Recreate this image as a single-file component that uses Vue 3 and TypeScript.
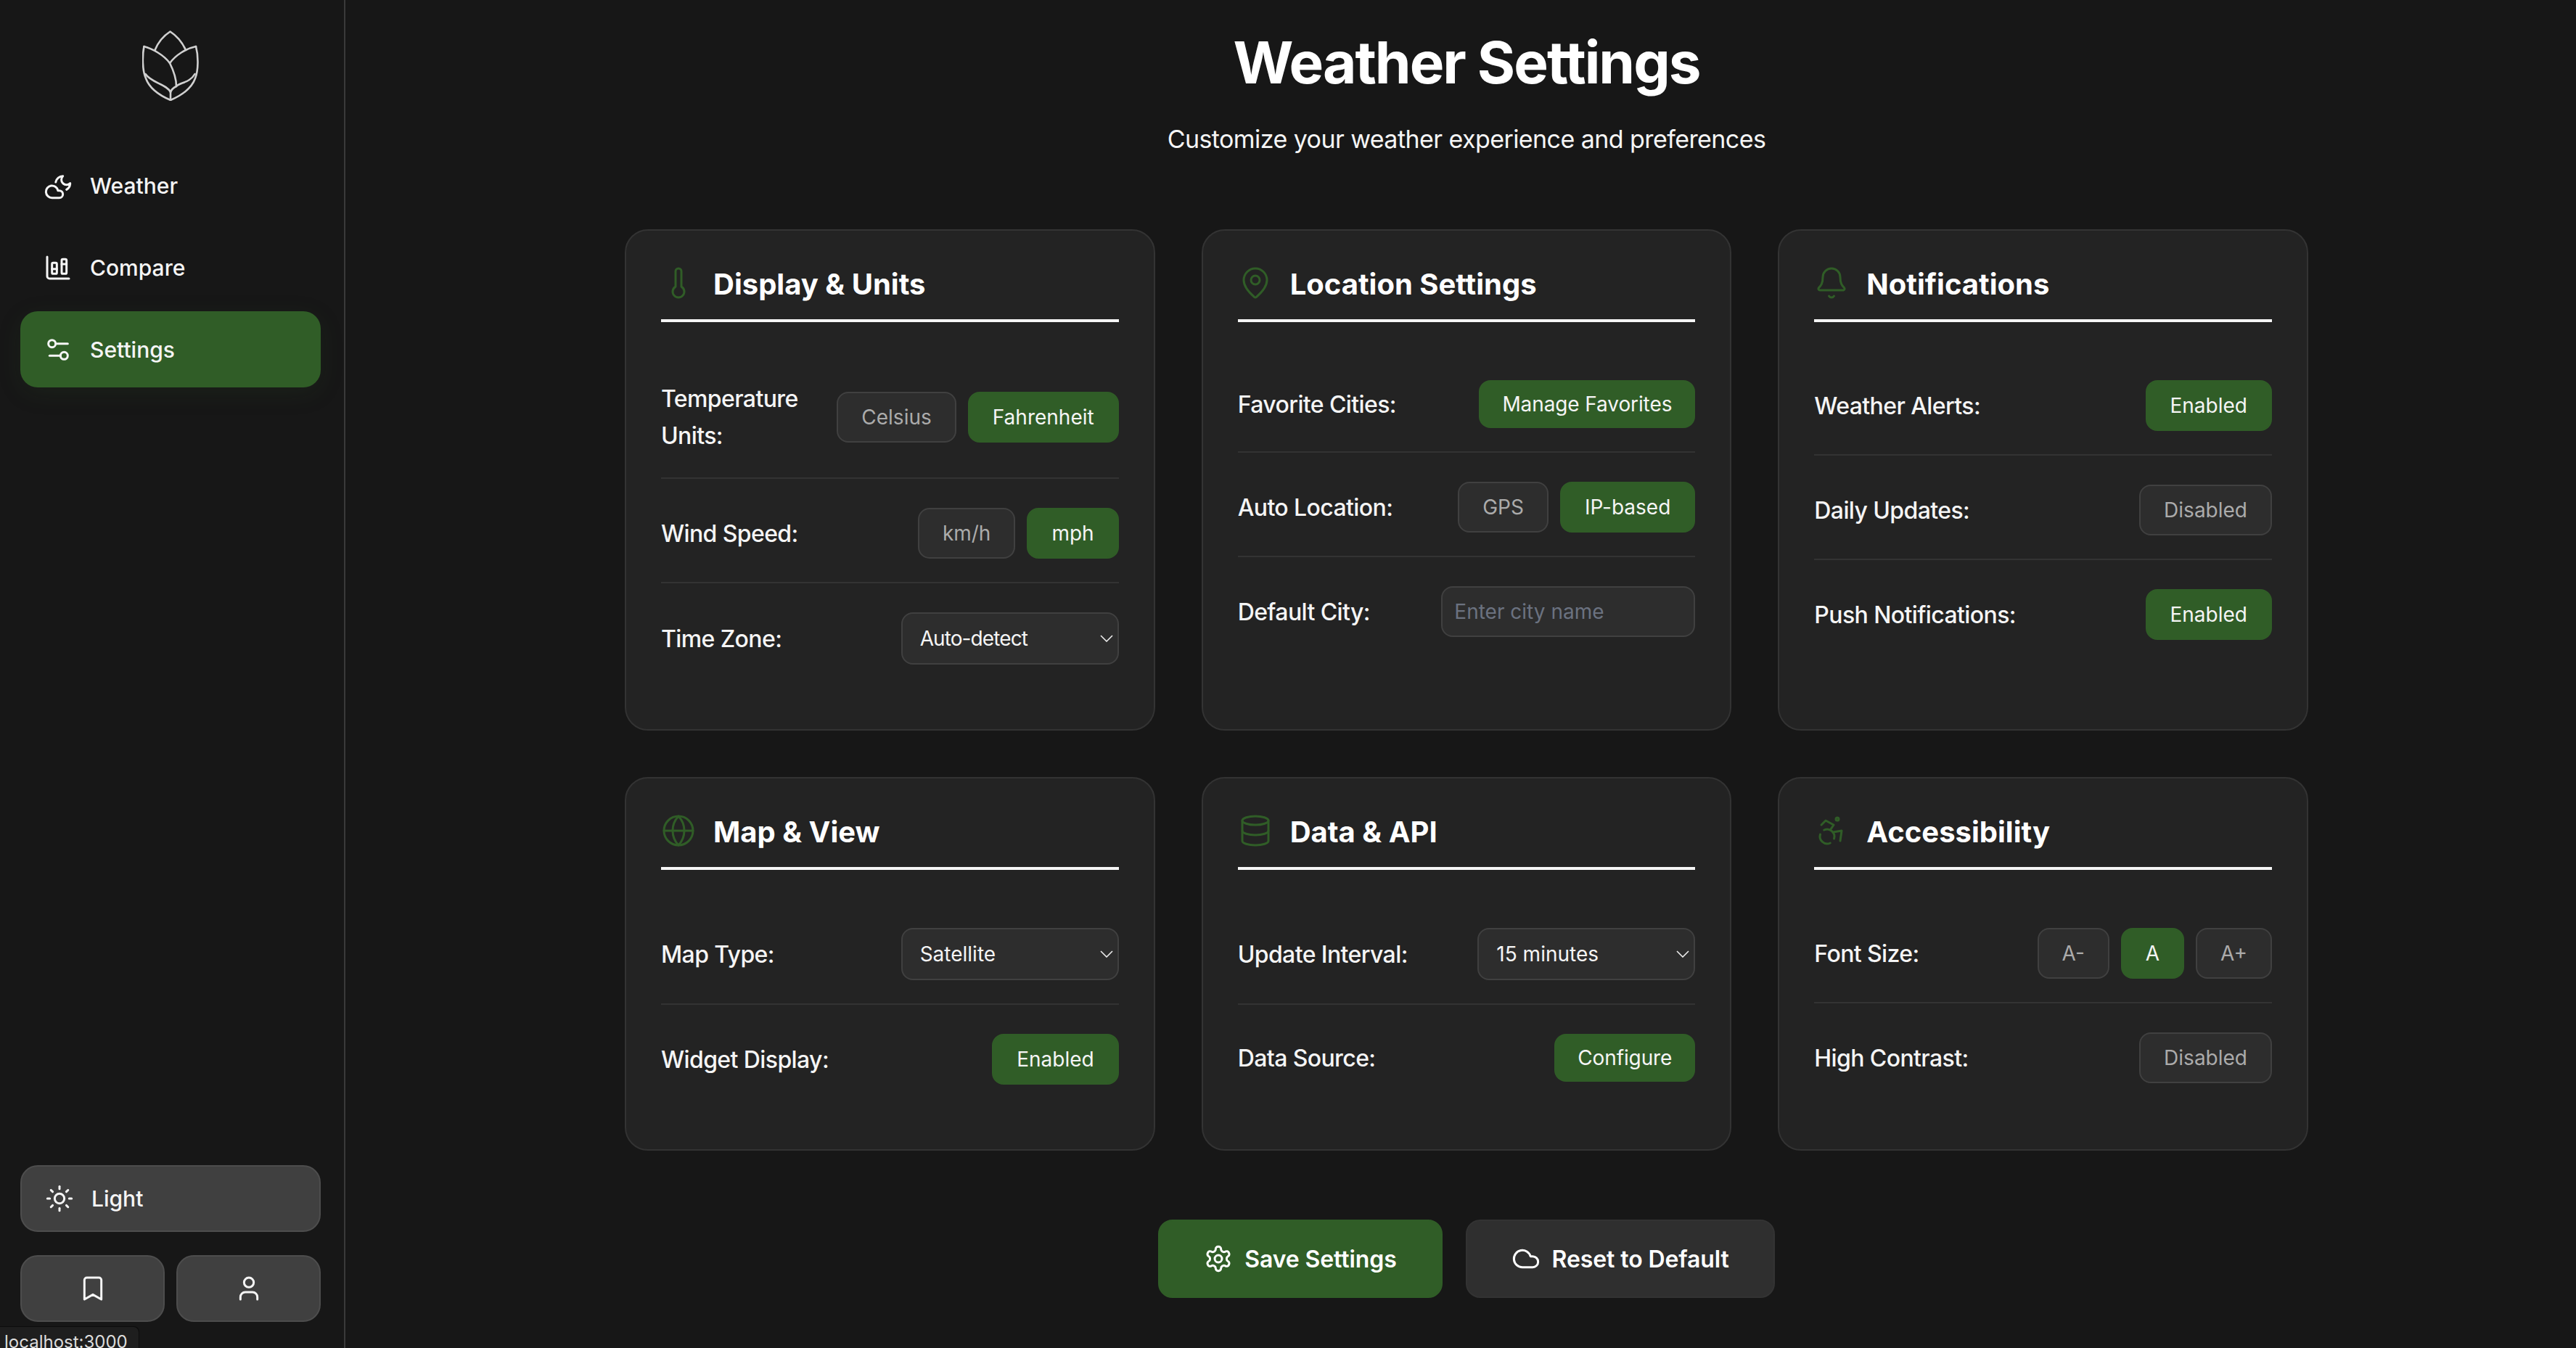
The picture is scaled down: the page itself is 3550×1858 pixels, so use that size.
<script setup lang="ts">
type Row =
  | { label: string; kind: 'toggle'; options: string[]; active: number }
  | { label: string; kind: 'select'; value: string; tight?: boolean }
  | { label: string; kind: 'input'; placeholder: string }
  | { label: string; kind: 'state'; on: boolean }
  | { label: string; kind: 'action'; text: string }

interface Card {
  title: string
  icon: string
  rows: Row[]
}

const icons: Record<string, string> = {
  moon: '<path d="M13 16a3 3 0 1 1 0 6H7a5 5 0 1 1 4.9-6Z"/><path d="M10.1 9A6 6 0 0 1 16 4a4.24 4.24 0 0 0 6 6 6 6 0 0 1-3 5.197"/>',
  chart: '<path d="M11 13H7"/><path d="M19 9h-4"/><path d="M3 3v16a2 2 0 0 0 2 2h16"/><rect x="15" y="5" width="4" height="12" rx="1"/><rect x="7" y="8" width="4" height="9" rx="1"/>',
  sliders: '<path d="M20 7h-9"/><path d="M14 17H5"/><circle cx="17" cy="17" r="3"/><circle cx="7" cy="7" r="3"/>',
  sun: '<circle cx="12" cy="12" r="4"/><path d="M12 2v2"/><path d="M12 20v2"/><path d="m4.93 4.93 1.41 1.41"/><path d="m17.66 17.66 1.41 1.41"/><path d="M2 12h2"/><path d="M20 12h2"/><path d="m6.34 17.66-1.41 1.41"/><path d="m19.07 4.93-1.41 1.41"/>',
  bookmark: '<path d="m19 21-7-4-7 4V5a2 2 0 0 1 2-2h10a2 2 0 0 1 2 2v16z"/>',
  user: '<path d="M19 21v-2a4 4 0 0 0-4-4H9a4 4 0 0 0-4 4v2"/><circle cx="12" cy="7" r="4"/>',
  thermometer: '<path d="M14 4v10.54a4 4 0 1 1-4 0V4a2 2 0 0 1 4 0Z"/>',
  pin: '<path d="M20 10c0 4.993-5.539 10.193-7.399 11.799a1 1 0 0 1-1.202 0C9.539 20.193 4 14.993 4 10a8 8 0 0 1 16 0"/><circle cx="12" cy="10" r="3"/>',
  bell: '<path d="M10.268 21a2 2 0 0 0 3.464 0"/><path d="M3.262 15.326A1 1 0 0 0 4 17h16a1 1 0 0 0 .74-1.673C19.41 13.956 18 12.499 18 8A6 6 0 0 0 6 8c0 4.499-1.411 5.956-2.738 7.326"/>',
  globe: '<circle cx="12" cy="12" r="10"/><path d="M12 2a14.5 14.5 0 0 0 0 20 14.5 14.5 0 0 0 0-20"/><path d="M2 12h20"/>',
  database: '<ellipse cx="12" cy="5" rx="9" ry="3"/><path d="M3 5V19A9 3 0 0 0 21 19V5"/><path d="M3 12A9 3 0 0 0 21 12"/>',
  access: '<circle cx="16" cy="4" r="1"/><path d="m18 19 1-7-6 1"/><path d="m5 8 3-3 5.5 3-2.36 3.5"/><path d="M4.24 14.5a5 5 0 0 0 6.88 6"/><path d="M13.76 17.5a5 5 0 0 0-6.88-6"/>',
  gear: '<path d="M12.22 2h-.44a2 2 0 0 0-2 2v.18a2 2 0 0 1-1 1.73l-.43.25a2 2 0 0 1-2 0l-.15-.08a2 2 0 0 0-2.73.73l-.22.38a2 2 0 0 0 .73 2.73l.15.1a2 2 0 0 1 1 1.72v.51a2 2 0 0 1-1 1.74l-.15.09a2 2 0 0 0-.73 2.73l.22.38a2 2 0 0 0 2.73.73l.15-.08a2 2 0 0 1 2 0l.43.25a2 2 0 0 1 1 1.73V20a2 2 0 0 0 2 2h.44a2 2 0 0 0 2-2v-.18a2 2 0 0 1 1-1.73l.43-.25a2 2 0 0 1 2 0l.15.08a2 2 0 0 0 2.73-.73l.22-.39a2 2 0 0 0-.73-2.73l-.15-.08a2 2 0 0 1-1-1.74v-.5a2 2 0 0 1 1-1.74l.15-.09a2 2 0 0 0 .73-2.73l-.22-.38a2 2 0 0 0-2.73-.73l-.15.08a2 2 0 0 1-2 0l-.43-.25a2 2 0 0 1-1-1.73V4a2 2 0 0 0-2-2z"/><circle cx="12" cy="12" r="3"/>',
  cloud: '<path d="M17.5 19H9a7 7 0 1 1 6.71-9h1.79a4.5 4.5 0 1 1 0 9Z"/>'
}

const navItems = [
  { label: 'Weather', icon: 'moon', active: false },
  { label: 'Compare', icon: 'chart', active: false },
  { label: 'Settings', icon: 'sliders', active: true }
]

const cards: Card[] = [
  {
    title: 'Display & Units',
    icon: 'thermometer',
    rows: [
      { label: 'Temperature Units:', kind: 'toggle', options: ['Celsius', 'Fahrenheit'], active: 1 },
      { label: 'Wind Speed:', kind: 'toggle', options: ['km/h', 'mph'], active: 1 },
      { label: 'Time Zone:', kind: 'select', value: 'Auto-detect', tight: true }
    ]
  },
  {
    title: 'Location Settings',
    icon: 'pin',
    rows: [
      { label: 'Favorite Cities:', kind: 'action', text: 'Manage Favorites' },
      { label: 'Auto Location:', kind: 'toggle', options: ['GPS', 'IP-based'], active: 1 },
      { label: 'Default City:', kind: 'input', placeholder: 'Enter city name' }
    ]
  },
  {
    title: 'Notifications',
    icon: 'bell',
    rows: [
      { label: 'Weather Alerts:', kind: 'state', on: true },
      { label: 'Daily Updates:', kind: 'state', on: false },
      { label: 'Push Notifications:', kind: 'state', on: true }
    ]
  },
  {
    title: 'Map & View',
    icon: 'globe',
    rows: [
      { label: 'Map Type:', kind: 'select', value: 'Satellite' },
      { label: 'Widget Display:', kind: 'state', on: true }
    ]
  },
  {
    title: 'Data & API',
    icon: 'database',
    rows: [
      { label: 'Update Interval:', kind: 'select', value: '15 minutes' },
      { label: 'Data Source:', kind: 'action', text: 'Configure' }
    ]
  },
  {
    title: 'Accessibility',
    icon: 'access',
    rows: [
      { label: 'Font Size:', kind: 'toggle', options: ['A-', 'A', 'A+'], active: 1 },
      { label: 'High Contrast:', kind: 'state', on: false }
    ]
  }
]
</script>

<template>
  <div class="app">
    <aside class="sidebar">
      <div class="logo">
        <svg width="78" height="97" viewBox="0 0 78 97" fill="none" stroke="#d0d0d0" stroke-width="2.6" stroke-linecap="round" stroke-linejoin="round">
          <path d="M17.5 27C22 16 30 7 38.5 1.5 47 7 55 16 60 27" />
          <path d="M2.5 22C14 25 30 34 38 45 43 55 47 65 47 77" />
          <path d="M74 22C60 25 46 34 38 45" />
          <path d="M2.5 22C0 35 0 55 5 66 10 80 25 90 39 96 53 90 68 80 73 66 77.5 55 77.5 35 74 22" />
          <path d="M4.5 60C12 72 34 74 39 85V96" />
          <path d="M72.5 60C66 72 51 72 47 77 43 79 40 82 39 85" />
        </svg>
      </div>
      <nav class="nav">
        <a v-for="item in navItems" :key="item.label" class="nav-item" :class="{ active: item.active }">
          <svg class="ic ic-40" viewBox="0 0 24 24" v-html="icons[item.icon]"></svg>
          <span>{{ item.label }}</span>
        </a>
      </nav>
      <div class="side-footer">
        <button class="theme-btn">
          <svg class="ic ic-40" viewBox="0 0 24 24" v-html="icons.sun"></svg>
          <span>Light</span>
        </button>
        <div class="side-actions">
          <button class="side-btn"><svg class="ic ic-40" viewBox="0 0 24 24" v-html="icons.bookmark"></svg></button>
          <button class="side-btn"><svg class="ic ic-40" viewBox="0 0 24 24" v-html="icons.user"></svg></button>
        </div>
      </div>
    </aside>

    <main class="main">
      <h1>Weather Settings</h1>
      <p class="subtitle">Customize your weather experience and preferences</p>

      <section class="grid">
        <article v-for="card in cards" :key="card.title" class="card">
          <header class="card-head">
            <svg class="ic ic-48" viewBox="0 0 24 24" v-html="icons[card.icon]"></svg>
            <h3>{{ card.title }}</h3>
          </header>
          <div class="rows">
            <div v-for="row in card.rows" :key="row.label" class="row">
              <label>{{ row.label }}</label>

              <div v-if="row.kind === 'toggle'" class="group">
                <button
                  v-for="(opt, i) in row.options"
                  :key="opt"
                  class="btn"
                  :class="i === row.active ? 'on' : 'off'"
                >{{ opt }}</button>
              </div>

              <div v-else-if="row.kind === 'select'" class="select-wrap">
                <select :class="{ tight: row.tight }">
                  <option>{{ row.value }}</option>
                </select>
                <svg class="chev" width="18" height="10" viewBox="0 0 18 10" fill="none" stroke="#ededed" stroke-width="1.6"><path d="M1 1l8 8 8-8" /></svg>
              </div>

              <input v-else-if="row.kind === 'input'" type="text" :placeholder="row.placeholder" />

              <button v-else-if="row.kind === 'state'" class="btn" :class="row.on ? 'on' : 'off'">
                {{ row.on ? 'Enabled' : 'Disabled' }}
              </button>

              <button v-else class="btn on plain">{{ row.text }}</button>
            </div>
          </div>
        </article>
      </section>

      <div class="page-actions">
        <button class="page-btn save">
          <svg class="ic ic-40" viewBox="0 0 24 24" v-html="icons.gear"></svg>
          <span>Save Settings</span>
        </button>
        <button class="page-btn reset">
          <svg class="ic ic-40" viewBox="0 0 24 24" v-html="icons.cloud"></svg>
          <span>Reset to Default</span>
        </button>
      </div>
    </main>

    <div class="status">localhost:3000</div>
  </div>
</template>

<style>
html,
body {
  margin: 0;
  background: #171717;
}
</style>

<style scoped>
.app {
  position: relative;
  display: flex;
  width: 3550px;
  height: 1858px;
  overflow: hidden;
  background: #171717;
  color: #f5f5f5;
  font-family: Inter, "Liberation Sans", sans-serif;
}

button,
select,
input {
  font-family: inherit;
}

.ic {
  display: block;
  flex-shrink: 0;
  fill: none;
  stroke: currentColor;
  stroke-linecap: round;
  stroke-linejoin: round;
}

.ic-40 {
  width: 40px;
  height: 40px;
  stroke-width: 1.8;
}

.ic-48 {
  width: 48px;
  height: 48px;
  stroke-width: 1.5;
  color: #305d27;
}

.sidebar {
  display: flex;
  flex-direction: column;
  flex-shrink: 0;
  box-sizing: border-box;
  width: 476px;
  height: 100%;
  padding: 42px 32px 36px 28px;
  border-right: 2px solid #3a3a3a;
}

.logo {
  display: flex;
  justify-content: center;
  padding-bottom: 64px;
}

.nav {
  display: flex;
  flex-direction: column;
  gap: 8px;
}

.nav-item {
  display: flex;
  align-items: center;
  gap: 24px;
  height: 105px;
  padding-left: 32px;
  border-radius: 24px;
  font-size: 30px;
  font-weight: 500;
}

.nav-item.active {
  background: #305d27;
  box-shadow: 0 8px 32px rgba(45, 90, 39, 0.15);
}

.side-footer {
  display: flex;
  flex-direction: column;
  gap: 32px;
  margin-top: auto;
}

.theme-btn,
.side-btn {
  display: flex;
  align-items: center;
  box-sizing: border-box;
  height: 92px;
  border: 2px solid #4d4d4d;
  border-radius: 24px;
  background: #404040;
  color: #f5f5f5;
}

.theme-btn {
  gap: 24px;
  padding: 0 32px;
  font-size: 30px;
  font-weight: 500;
}

.side-actions {
  display: flex;
  gap: 16px;
}

.side-btn {
  flex: 1;
  justify-content: center;
  padding: 0;
}

.status {
  position: absolute;
  left: 0;
  bottom: 0;
  box-sizing: border-box;
  width: 192px;
  height: 30px;
  padding-left: 6px;
  overflow: hidden;
  border: 1px solid #0c0c0c;
  border-left: none;
  border-bottom: none;
  border-top-right-radius: 8px;
  background: #1e1e1e;
  color: #dcdcdc;
  font-size: 24px;
  line-height: 42px;
}

.main {
  flex: 1;
  min-width: 0;
  box-sizing: border-box;
  display: flex;
  flex-direction: column;
  align-items: center;
  padding: 37px 0 0 16px;
}

h1 {
  margin: 0 0 37px;
  font-size: 80px;
  font-weight: 700;
  line-height: 97px;
  letter-spacing: -2px;
  color: #fff;
}

.subtitle {
  margin: 0 0 104px;
  font-size: 34px;
  line-height: 41px;
  letter-spacing: -0.57px;
  color: #f5f5f5;
}

.grid {
  display: grid;
  grid-template-columns: repeat(3, 1fr);
  gap: 64px;
  width: 2320px;
}

.card {
  box-sizing: border-box;
  padding: 48px 48px 57px;
  border: 2px solid #333;
  border-radius: 32px;
  background: #232323;
}

.card-head {
  display: flex;
  align-items: flex-start;
  gap: 24px;
  padding-bottom: 22px;
  margin-bottom: 48px;
  border-bottom: 4px solid #f5f5f5;
}

h3 {
  margin: 0;
  font-size: 40px;
  font-weight: 700;
  line-height: 52px;
  color: #fff;
}

.row {
  display: flex;
  align-items: center;
  justify-content: space-between;
  gap: 32px;
  padding: 32px 0;
  border-bottom: 2px solid #333;
}

.row + .row {
  padding-top: 40px;
}

.row:last-child {
  border-bottom: none;
}

label {
  font-size: 32px;
  font-weight: 500;
  line-height: 51px;
  letter-spacing: -0.6px;
  color: #f5f5f5;
}

.group {
  display: flex;
  flex-shrink: 0;
  gap: 16px;
}

.btn {
  flex-shrink: 0;
  box-sizing: border-box;
  padding: 16px 32px;
  border: 2px solid transparent;
  border-radius: 16px;
  font-size: 28px;
  font-weight: 400;
  line-height: 34px;
}

.btn.on {
  border-color: #305d27;
  background: #305d27;
  color: #f5f5f5;
}

.btn.off {
  border-color: #404040;
  background: #2d2d2d;
  color: #ababab;
}

.btn.plain {
  border: none;
  letter-spacing: -0.1px;
}

.select-wrap {
  position: relative;
  flex-shrink: 0;
  width: 300px;
  height: 72px;
}

select {
  appearance: none;
  box-sizing: border-box;
  width: 100%;
  height: 100%;
  padding: 0 24px;
  border: 2px solid #404040;
  border-radius: 16px;
  background: #2d2d2d;
  color: #f5f5f5;
  font-size: 28px;
}

select.tight {
  letter-spacing: -0.9px;
}

.chev {
  position: absolute;
  top: 31px;
  right: 8px;
}

input {
  flex-shrink: 0;
  box-sizing: border-box;
  width: 350px;
  height: 70px;
  padding: 0 16px;
  border: 2px solid #404040;
  border-radius: 16px;
  outline: none;
  background: #2d2d2d;
  color: #f5f5f5;
  font-size: 28px;
}

input::placeholder {
  color: #6b7280;
}

.page-actions {
  display: flex;
  gap: 32px;
  margin-top: 95px;
}

.page-btn {
  display: flex;
  align-items: center;
  gap: 16px;
  box-sizing: border-box;
  height: 108px;
  padding: 0 61px;
  border-radius: 20px;
  color: #fff;
  font-size: 32px;
  font-weight: 600;
  letter-spacing: -0.1px;
}

.page-btn.save {
  border: 2px solid #305d27;
  background: #305d27;
}

.page-btn.reset {
  border: 2px solid #333;
  background: #2f2f2f;
}
</style>
